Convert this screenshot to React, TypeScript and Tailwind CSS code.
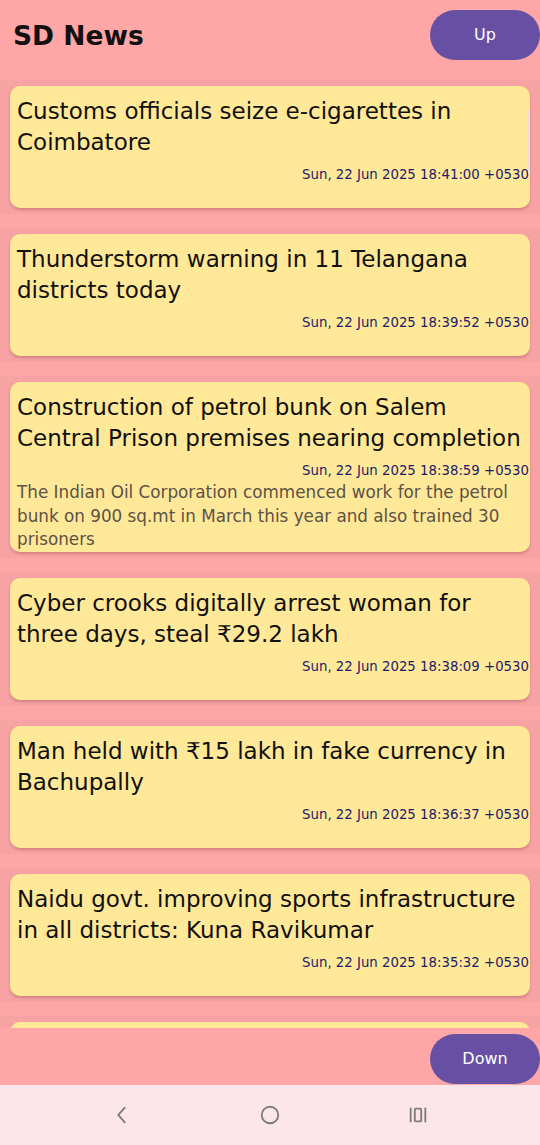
import React from 'react';

type NewsItem = {
  id: number;
  title: string;
  date: string;
  description?: string;
};

const news: NewsItem[] = [
  { id: 1, title: 'Customs officials seize e-cigarettes in Coimbatore', date: 'Sun, 22 Jun 2025 18:41:00 +0530' },
  { id: 2, title: 'Thunderstorm warning in 11 Telangana districts today', date: 'Sun, 22 Jun 2025 18:39:52 +0530' },
  {
    id: 3,
    title: 'Construction of petrol bunk on Salem Central Prison premises nearing completion',
    date: 'Sun, 22 Jun 2025 18:38:59 +0530',
    description:
      'The Indian Oil Corporation commenced work for the petrol bunk on 900 sq.mt in March this year and also trained 30 prisoners',
  },
  { id: 4, title: 'Cyber crooks digitally arrest woman for three days, steal ₹29.2 lakh', date: 'Sun, 22 Jun 2025 18:38:09 +0530' },
  { id: 5, title: 'Man held with ₹15 lakh in fake currency in Bachupally', date: 'Sun, 22 Jun 2025 18:36:37 +0530' },
  { id: 6, title: 'Naidu govt. improving sports infrastructure in all districts: Kuna Ravikumar', date: 'Sun, 22 Jun 2025 18:35:32 +0530' },
];

function NewsCard({ item, first }: { item: NewsItem; first?: boolean }) {
  return (
    <div className="bg-[#f7a2a3] px-[10px] py-[6px]">
      <div className="relative overflow-hidden rounded-[10px] bg-[#ffe898] pl-[7px] pt-[10px] shadow-[0_2px_3px_rgba(150,70,70,0.35)]">
        <h2 className="text-[23px] leading-[31px] text-[#111]">{item.title}</h2>
        <div className="mt-[7px] whitespace-nowrap pr-[1px] text-right text-[13.3px] leading-[20px] text-[#1d1a6b]">{item.date}</div>
        <p className="min-h-[23px] pr-[4px] text-[16.8px] leading-[23.5px] text-[#5c5247]">{item.description}</p>
        {first && (
          <div className="absolute right-0 top-[24px] h-[64px] w-[2px] rounded-full bg-[#e9e2e0]" />
        )}
      </div>
    </div>
  );
}

export default function App() {
  return (
    <div
      className="flex h-[1145px] w-[540px] flex-col overflow-hidden bg-[#ffa7a7]"
      style={{ fontFamily: '"DejaVu Sans", "Noto Sans", sans-serif' }}
    >
      <header className="flex h-[80px] items-start justify-between pl-[13px] pt-[10px]">
        <h1 className="mt-[8px] text-[26.5px] font-bold leading-[36px] text-[#111]">SD News</h1>
        <button className="h-[50px] w-[110px] rounded-full bg-[#6750a4] text-[16px] text-white">Up</button>
      </header>

      <div className="flex h-[948px] flex-col gap-[14px] overflow-hidden">
        {news.map((item, i) => (
          <NewsCard key={item.id} item={item} first={i === 0} />
        ))}
        <div className="bg-[#f7a2a3] px-[10px] py-[6px]">
          <div className="h-[122px] rounded-[10px] bg-[#ffe898]" />
        </div>
      </div>

      <div className="flex h-[57px] items-start justify-end pt-[6px]">
        <button className="h-[50px] w-[110px] rounded-full bg-[#6750a4] text-[16px] text-white">Down</button>
      </div>

      <nav className="flex h-[60px] items-center justify-center gap-[126px] bg-[#fde6ea] text-[#7d7a7b]">
        <svg width="22" height="22" viewBox="0 0 24 24" fill="none" stroke="currentColor" strokeWidth="2" strokeLinecap="round">
          <path d="M15 4 L8 12 L15 20" />
        </svg>
        <svg width="22" height="22" viewBox="0 0 24 24" fill="none" stroke="currentColor" strokeWidth="2">
          <circle cx="12" cy="12" r="9" />
        </svg>
        <svg width="22" height="22" viewBox="0 0 24 24" fill="none" stroke="currentColor" strokeWidth="2">
          <path d="M4 4 V20" />
          <path d="M20 4 V20" />
          <rect x="8.5" y="5" width="7" height="14" rx="1" />
        </svg>
      </nav>
    </div>
  );
}
